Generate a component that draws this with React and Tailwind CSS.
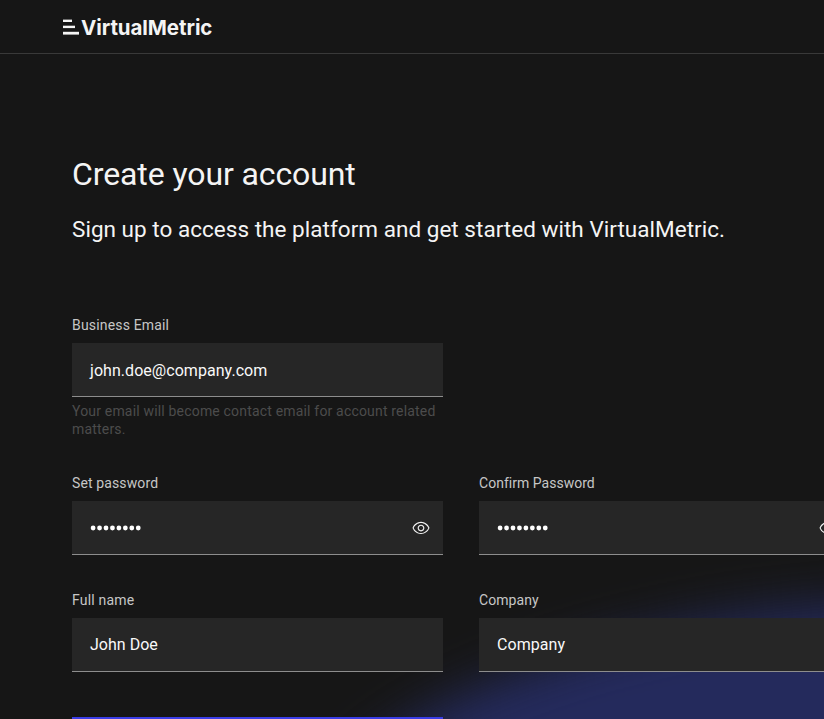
import React from "react";

function Logo() {
  return (
    <div className="flex items-center">
      <svg width="17" height="17" viewBox="0 0 17 17" fill="#f4f4f4" aria-hidden="true">
        <rect x="0" y="1.6" width="9" height="2.4" />
        <rect x="0" y="7.7" width="12" height="2.4" />
        <rect x="0" y="13.8" width="16" height="2.8" />
      </svg>
      <span className="mt-px ml-px whitespace-nowrap pt-px font-['Inter',sans-serif] text-[20.5px] font-bold leading-6 tracking-[-0.07px] text-[#f4f4f4]">
        VirtualMetric
      </span>
    </div>
  );
}

function EyeIcon() {
  return (
    <svg width="18" height="18" viewBox="0 0 16 16" fill="#f4f4f4" aria-hidden="true">
      <path d="M15.5 7.8C14.3 4.7 11.3 2.6 8 2.5 4.7 2.6 1.7 4.7.5 7.8c0 .1 0 .2 0 .3 1.2 3.1 4.1 5.2 7.5 5.3 3.3-.1 6.3-2.2 7.5-5.3 0-.1 0-.2 0-.3zM8 12.5c-2.7 0-5.4-2-6.5-4.5 1-2.5 3.8-4.5 6.5-4.5s5.4 2 6.5 4.5c-1 2.5-3.8 4.5-6.5 4.5z" />
      <path d="M8 5C6.300 5 5 6.300 5 8s1.300 3 3 3 3-1.300 3-3-1.300-3-3-3zm0 5c-1.100 0-2-.9-2-2s.9-2 2-2 2 .9 2 2-.9 2-2 2z" />
    </svg>
  );
}

function Dots() {
  return (
    <svg width="52" height="6" viewBox="0 0 52 6" className="mt-px" fill="#fff" aria-hidden="true">
      {Array.from({ length: 8 }, (_, i) => (
        <circle key={i} cx={3.1 + i * 6.45} cy="3" r="2.4" />
      ))}
    </svg>
  );
}

function Field({ label, labelClass, children, password }) {
  return (
    <div className="w-[371px] shrink-0">
      <div className={"h-[27px] whitespace-nowrap text-[14px] leading-[18px] text-[#c6c6c6] " + labelClass}>{label}</div>
      <div className="flex h-[54px] items-center justify-between border-b border-[#8d8d8d] bg-[#262626] pl-[18px] pr-[13px] text-[16px] leading-5 text-[#f9f9f9]">
        {children}
        {password && <EyeIcon />}
      </div>
    </div>
  );
}

export default function App() {
  return (
    <div className="relative h-[719px] w-[824px] overflow-hidden bg-[#161616] font-['Roboto',sans-serif]">
      <div className="absolute left-[312px] top-[608px] h-[390px] w-[1010px] -rotate-6 rounded-[50%] bg-[#242a5c] blur-[25px]" />
      <div className="relative">
        <header className="flex h-[54px] items-center border-b border-[#393939] bg-[#161616] pl-[63px]">
          <Logo />
        </header>
        <main className="pl-[72px]">
          <h1 className="pt-[98px] text-[32px] font-normal leading-[44px] tracking-[-0.1px] whitespace-nowrap text-[#f4f4f4]">
            <span>Create your account</span>
          </h1>
          <p className="mt-[18px] whitespace-nowrap text-[22.5px] leading-[30px] tracking-[0.03px] text-[#f4f4f4]">
            <span>Sign up to access the platform and get started with VirtualMetric.</span>
          </p>
          <div className="mt-[72px]">
            <Field label="Business Email" labelClass="tracking-[0.17px]">
              <span className="pt-[2px] tracking-[0.05px]">john.doe@company.com</span>
            </Field>
            <p className="mt-[5px] h-9 w-[371px] text-[14px] leading-[18px] tracking-[0.18px] text-[#4c4c4c]">
              <span className="whitespace-nowrap">Your email will become contact email for account related</span>
              <br />
              <span>matters.</span>
            </p>
          </div>
          <div className="mt-9 flex gap-9">
            <Field label="Set password" labelClass="tracking-[0.12px]" password>
              <Dots />
            </Field>
            <Field label="Confirm Password" labelClass="tracking-[0.02px]" password>
              <Dots />
            </Field>
          </div>
          <div className="mt-9 flex gap-9">
            <Field label="Full name" labelClass="tracking-[0.2px]">
              <span className="tracking-[0.02px]">John Doe</span>
            </Field>
            <Field label="Company" labelClass="tracking-[0.07px]">
              <span className="tracking-[0.05px]">Company</span>
            </Field>
          </div>
          <div className="mt-[45px] h-[54px] w-[371px] bg-[#3a3de6]" />
        </main>
      </div>
    </div>
  );
}
